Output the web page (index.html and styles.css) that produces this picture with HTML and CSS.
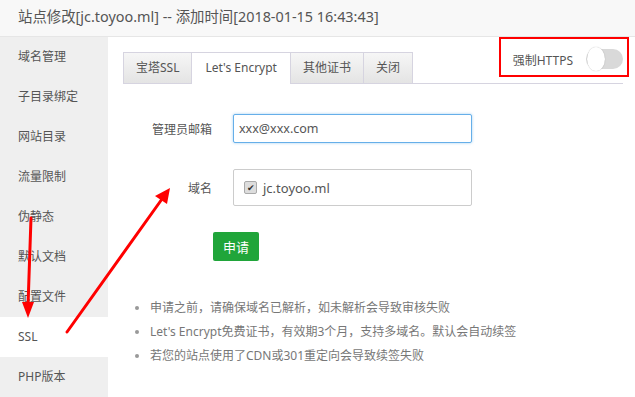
FILE: index.html
```html
<!DOCTYPE html>
<html lang="zh-CN">
<head>
    <meta charset="UTF-8">
    <meta name="viewport" content="width=device-width, initial-scale=1.0">
    <title>站点修改</title>
    <link rel="stylesheet" href="styles.css">
</head>
<body>
    <div class="title">站点修改[jc.toyoo.ml] -- 添加时间[2018-01-15 16:43:43]</div>

    <div class="layout">
        <ul class="side">
            <li>域名管理</li>
            <li>子目录绑定</li>
            <li>网站目录</li>
            <li>流量限制</li>
            <li>伪静态</li>
            <li>默认文档</li>
            <li>配置文件</li>
            <li class="active">SSL</li>
            <li>PHP版本</li>
        </ul>

        <div class="main">
            <div class="tabs">
                <span class="tab">宝塔SSL</span>
                <span class="tab on">Let's Encrypt</span>
                <span class="tab">其他证书</span>
                <span class="tab">关闭</span>
            </div>

            <div class="force">
                <span>强制HTTPS</span>
                <span class="switch"><span class="knob"></span></span>
            </div>

            <div class="row">
                <label class="lbl">管理员邮箱</label>
                <input class="email" type="text" value="xxx@xxx.com">
            </div>
            <div class="row">
                <label class="lbl">域名</label>
                <div class="domains">
                    <span class="check">&#10004;</span>
                    <span>jc.toyoo.ml</span>
                </div>
            </div>
            <button class="apply">申请</button>

            <ul class="tips">
                <li>申请之前，请确保域名已解析，如未解析会导致审核失败</li>
                <li>Let's Encrypt免费证书，有效期3个月，支持多域名。默认会自动续签</li>
                <li>若您的站点使用了CDN或301重定向会导致续签失败</li>
            </ul>
        </div>
    </div>

    <svg class="marks" width="635" height="397" viewBox="0 0 635 397">
        <g stroke="#f00" stroke-width="3" fill="none" stroke-linecap="round">
            <line x1="31" y1="218" x2="28" y2="306"/>
            <line x1="67" y1="332" x2="162" y2="199"/>
        </g>
        <g fill="#f00">
            <polygon points="22,302 34,302 28,318"/>
            <polygon points="155,196 167,204 170,188"/>
        </g>
    </svg>
</body>
</html>
```

FILE: styles.css
```css
body {
    margin: 0;
    width: 635px;
    height: 397px;
    overflow: hidden;
    font-family: "Noto Sans", "Noto Sans CJK SC", sans-serif;
    color: #555;
    background-color: #fff;
    position: relative;
}
.title {
    height: 36px;
    line-height: 34px;
    padding-left: 18px;
    font-size: 14.4px;
    color: #555;
    background-color: #f8f8f8;
    border-bottom: 1px solid #e6e6e6;
}
.layout {
    display: flex;
    height: 360px;
}
.side {
    list-style: none;
    margin: 0;
    padding: 0;
    width: 108px;
    background-color: #efefef;
}
.side li {
    height: 40px;
    line-height: 40px;
    padding-left: 18px;
    font-size: 12px;
    color: #555;
}
.side li.active {
    background-color: #fff;
}
.main {
    flex: 1;
    padding: 15px 12px 0 15px;
}
.tabs {
    display: flex;
    height: 31px;
    border-bottom: 1px solid #d6d4e0;
    width: 500px;
}
.tab {
    height: 30px;
    line-height: 30px;
    padding: 0 12px;
    font-size: 12px;
    color: #555;
    border: 1px solid #d6d4e0;
    border-right: none;
    background: linear-gradient(#f6f6f6, #e4e4e4);
}
.tab:last-child {
    border-right: 1px solid #d6d4e0;
}
.tab.on {
    background: #fff;
    height: 31px;
    border-bottom: none;
    padding: 0 13px;
}
.force {
    position: absolute;
    left: 499px;
    top: 37px;
    width: 130px;
    height: 40px;
    border: 2px solid #f00;
    display: flex;
    align-items: center;
    justify-content: flex-end;
    gap: 13px;
    padding-right: 4px;
    box-sizing: border-box;
    font-size: 12px;
    color: #555;
}
.force span:first-child {
    padding-top: 6px;
}
.switch {
    width: 36px;
    height: 20px;
    border-radius: 10px;
    background-color: #d9d9d9;
    display: flex;
    align-items: center;
    padding-left: 1px;
    margin-top: 4px;
}
.knob {
    width: 18px;
    height: 18px;
    border-radius: 50%;
    background-color: #fff;
    box-shadow: 0 0 1px rgba(0,0,0,0.3);
}
.row {
    display: flex;
    align-items: center;
    gap: 21px;
    margin-top: 30px;
}
.row + .row {
    margin-top: 26px;
}
.lbl {
    width: 89px;
    text-align: right;
    font-size: 12px;
    color: #555;
}
.email {
    width: 239px;
    height: 29px;
    box-sizing: border-box;
    border: 1px solid #66afe9;
    border-radius: 2px;
    box-shadow: 0 0 3px rgba(102,175,233,0.6);
    padding: 0 5px;
    font-family: inherit;
    font-size: 12.5px;
    color: #555;
    outline: none;
}
.domains {
    width: 239px;
    height: 37px;
    box-sizing: border-box;
    border: 1px solid #ccc;
    border-radius: 2px;
    display: flex;
    align-items: center;
    gap: 6px;
    padding-left: 10px;
    font-size: 13px;
    color: #555;
}
.check {
    width: 11px;
    height: 11px;
    border: 1px solid #aaa;
    border-radius: 2px;
    background-color: #ddd;
    font-size: 9px;
    line-height: 11px;
    text-align: center;
    color: #333;
}
.apply {
    display: block;
    margin: 26px 0 0 90px;
    width: 46px;
    height: 29px;
    border: none;
    border-radius: 2px;
    background-color: #20a53a;
    color: #fff;
    font-family: inherit;
    font-size: 13px;
    padding: 0;
}
.tips {
    margin: 35px 0 0;
    padding-left: 27px;
    font-size: 12px;
    color: #777;
}
.tips li {
    line-height: 24px;
}
.tips li::marker {
    color: #999;
}
.marks {
    position: absolute;
    left: 0;
    top: 0;
    pointer-events: none;
}
```
